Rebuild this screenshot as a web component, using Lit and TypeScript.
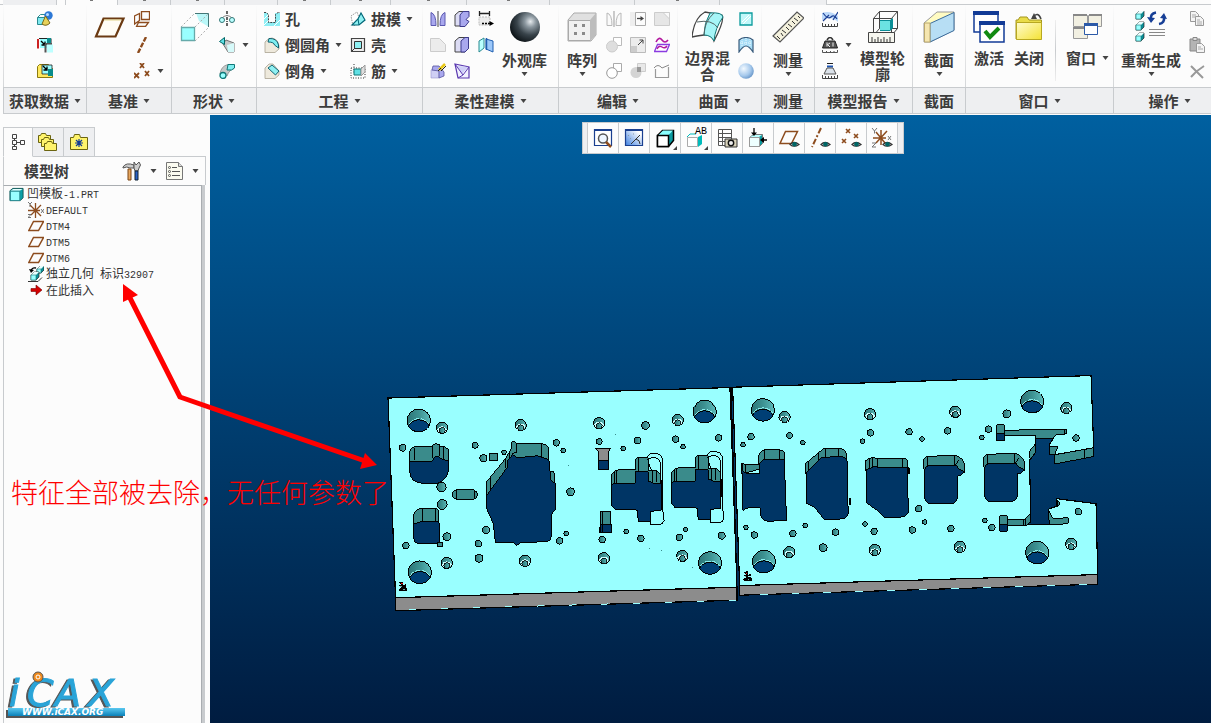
import { LitElement, html, css, svg, nothing } from "lit";
import { customElement } from "lit/decorators.js";

type Tpl = unknown;

/* ---------- 16px icons ---------- */
const cube = (x: number, y: number, s: number) => svg`
  <path d="M${x} ${y + 3}l3-3h${s}v${s}l-3 3h-${s}z" fill="#0b8f97" stroke="#222" stroke-width=".7"/>
  <path d="M${x} ${y + 3}l3-3h${s}l-3 3z" fill="#e8ffff"/>
  <rect x=${x} y=${y + 3} width=${s} height=${s} fill="#9ff" stroke="#177" stroke-width=".6"/>`;
const eye = svg`<path d="M9 14.500Q13 10.500 18 14.500Q13 18 9 14.500z" fill="#fff" stroke="#333" stroke-width="1.200"/><circle cx="13.500" cy="14.300" r="2.300" fill="#066"/>`;

const ICONS: Record<string, Tpl> = {
  shapes: svg`<path d="M.5 6.500h9v7h-9z" fill="#7fe9ef" stroke="#2a8a90"/><path d="M.5 6.500l3-3h5" fill="none" stroke="#2a8a90"/><circle cx="11.500" cy="4.500" r="4.200" fill="#2d78d6"/><circle cx="10.500" cy="3.500" r="1.500" fill="#b8dcff"/><path d="M5 13l3.500-8 4.500 7Q9 16 5 13z" fill="#e8d25a" stroke="#7a6a1a"/>`,
  copyGeom: svg`<path d="M2 1.500h12v5" fill="none" stroke="#222"/><path d="M3 2h10v9H3z" fill="#9ff"/><path d="M10 1h4v6h-4z" fill="#0a8c8c"/><path d="M1 2v9.500" stroke="#c22" stroke-width="2"/><path d="M4 4l4 4M8 4.500V8H4.500" stroke="#000" stroke-width="1.300" fill="none"/><path d="M8.500 7v8.500M8 7h7" stroke="#555" stroke-width="2"/><path d="M10 7.500h6v8h-6z" fill="#bdffff"/>`,
  shrink: svg`<path d="M.5 3.500l2-2h9v4h4v9h-15z" fill="#ffe95e" stroke="#8c7a10"/><path d="M5 2h10v9H5z" fill="#9ff" stroke="#222" stroke-width=".8"/><path d="M6 3l4 4M10 3.500V7H6.500" stroke="#000" stroke-width="1.300" fill="none"/><path d="M11 6h5v7h-5z" fill="#0a8c8c"/>`,
  planes: svg`<g fill="none" stroke="#8d4c1e" stroke-width="1.300"><path d="M7.500.5h8v8h-8zM5.500 2.500v7l-5 3.500V5zM4.500 11.500h10l-3 4h-9z"/></g>`,
  axis: svg`<path d="M12 0L4 16" stroke="#8d4c1e" stroke-width="2.400" stroke-dasharray="5 1.500"/>`,
  points: svg`<g stroke="#8d4c1e" stroke-width="1.800"><path d="M6 0l4 5M10 0L6 5M0 10l5 5M5 10l-5 5M11 8l4 5M15 8l-4 5"/></g>`,
  revolve: svg`<path d="M8 0v16" stroke="#000" stroke-width="1.200" stroke-dasharray="3 1 1 1"/><path d="M2 8Q8 1 14 8" fill="none" stroke="#888"/><circle cx="3" cy="9" r="2.500" fill="#bff" stroke="#377"/><circle cx="13" cy="9" r="2.500" fill="#bff" stroke="#377"/>`,
  sweep: svg`<path d="M4 7L7 3l8 3v9H9z" fill="#c4c8c8" stroke="#555" stroke-width=".8"/><path d="M8 8l7-2v9H9z" fill="#d6fafa"/><path d="M.5 4.500L5.500.5v7z" fill="#5fe0e4" stroke="#066"/>`,
  blend: svg`<path d="M1 11Q2 3 9 1.500l6 4Q10 7 8 13z" fill="#c4c8c8" stroke="#888" stroke-width=".8"/><path d="M9 1.500h6.500V5l-3 2H8z" fill="#7feef0" stroke="#177"/><circle cx="4" cy="12.500" r="3" fill="#9ff" stroke="#177" stroke-width="1.300"/>`,
  hole: svg`<path d="M0 2h4v9h7V2h5v13H0z" fill="#8eeef4"/><path d="M0 8l4-4M0 14L5 9M10 15l6-6" stroke="#fff"/><path d="M0 1.500h2l2.500 2v8h7v-8l2.500-2h2" fill="none" stroke="#444" stroke-dasharray="2 1"/>`,
  round: svg`<path d="M1 5Q5 .5 8 1q6 1 7 8v3l-4 3.500H1z" fill="#eee9dc" stroke="#aaa292" stroke-width=".8"/><path d="M5 1.500Q13 1 14.500 8v3l-4-3Q10 5 4 5z" fill="#7feef0" stroke="#056" stroke-width=".9"/>`,
  chamfer: svg`<path d="M1 5l4-4h4l6 7v4l-4 3.500H1z" fill="#eee9dc" stroke="#aaa292" stroke-width=".8"/><path d="M8 2l7 6-3.500 4L4 5z" fill="#8ff0f2" stroke="#056" stroke-width=".9"/>`,
  draft: svg`<path d="M1 5l6-4 4 11-8 3z" fill="#fff" stroke="#999" stroke-dasharray="1.500 1"/><path d="M2 14L8 8l3-6 4 7-6 5z" fill="#8ff0f2" stroke="#067" stroke-width="1.200"/><path d="M8 8l1 6" stroke="#067"/>`,
  shell: svg`<path d="M1.500 1.500h13v13h-13z" fill="#eee" stroke="#444" stroke-width="1.200"/><path d="M4.500 4.500h7v7h-7z" fill="#8ff0f2" stroke="#333"/><path d="M2 14l3-3" stroke="#333"/>`,
  rib: svg`<path d="M1 5h14v10H1zM4 1v10" fill="none" stroke="#333" stroke-dasharray="1 1.500"/><path d="M4 6h7v6H4z" fill="#5fe0e4" stroke="#177"/><path d="M11 6l4-4v7l-4 4z" fill="#ddd" stroke="#999"/>`,
  mirrorP: svg`<path d="M1 1.500Q6 3 6 14.500H1zM15 1.500Q10 3 10 14.500h5z" fill="#a9a8ee" stroke="#5b59b0"/><path d="M8 0v16" stroke="#444"/>`,
  flexA: svg`<path d="M1 4l4-3.500h9l-3 3.500v11H1z" fill="#dcdcf4" stroke="#444"/><path d="M6 4l3-3.500h6v5l-3 3 3 2-4 5H6z" fill="#a9a8ee" stroke="#3d3b8c"/>`,
  dim: svg`<path d="M1.500 0v5M11.500 0v5M1 2.500h11" stroke="#222" stroke-width="1.300"/><path d="M1 6h11v4l-2 4H1z" fill="#ececec" stroke="#bbb" stroke-dasharray="2 1"/><path d="M4 12.500h8" stroke="#000" stroke-width="1.300" stroke-dasharray="2 1"/><path d="M11.500 10l4.500 2.500-4.500 2.500z" fill="#000"/>`,
  fadeA: svg`<path d="M.5 1.500h9l6 6v7H.5z" fill="#ececec" stroke="#ccc"/>`,
  flexB: svg`<path d="M1 4l4-3.500h9.500v11L11 15H1z" fill="#dcdcf4" stroke="#444"/><path d="M7 4l4-3.500h3.500v11L11 15H7z" fill="#a9a8ee" stroke="#3d3b8c"/>`,
  attach: svg`<path d="M1 4l5-3v10l-5 4z" fill="#bff" stroke="#2a8a90"/><path d="M8 2l7 2v11l-7-3z" fill="#9cc8fa" stroke="#1f5fb0"/><path d="M8.500 1v12" stroke="#1f5fb0" stroke-width="1.500"/>`,
  wizard: svg`<path d="M1 7h8v8H1z" fill="#cfcff4" stroke="#9795cc" stroke-width=".6"/><path d="M3 3h6l5 6v4l-5 2V8L2 7z" fill="#a9a8ee" stroke="#55539c" stroke-width=".8"/><path d="M9 7l6-6" stroke="#e8c818" stroke-width="2.500"/><path d="M8 8l3-3M11 8l5-5" stroke="#222" stroke-width="1"/>`,
  triFlex: svg`<path d="M1 1l14 3v11H4z" fill="#f2f2fe" stroke="#5b39b0" stroke-width="1.200"/><path d="M3 3l5 8 6-7z" fill="#cfcff8"/><path d="M1 1l8 11 6-8M9 12l-5 3" stroke="#5b39b0" fill="none"/>`,
  mirrorG: svg`<path d="M1 2Q6 3 6 14.500H1zM15 2Q10 3 10 14.500h5z" fill="#fafafa" stroke="#b8b8b8"/><path d="M8 0v16" stroke="#999"/>`,
  extend: svg`<path d="M0 1h6v14H0z" fill="#eee"/><path d="M5.500 1.500h10v13h-10z" fill="#fcfcfc" stroke="#aaa"/><path d="M7 7.500h4" stroke="#444" stroke-width="1.300"/><path d="M10.500 5l3.500 2.500-3.500 2.500z" fill="#444"/>`,
  fadeB: svg`<path d="M.5 1.500h15v13H.5z" fill="#e6e6e6" stroke="#ccc"/><path d="M9 1.500h6.500V8z" fill="#fafafa" stroke="#ccc"/>`,
  mergeA: svg`<path d="M7.500.5h8v8h-8z" fill="#fff" stroke="#bbb"/><circle cx="6" cy="9.500" r="5.500" fill="#dedede" stroke="#ccc"/>`,
  scale: svg`<path d="M.5.5h15v15H.5z" fill="#ececec" stroke="#bbb"/><path d="M1 9h6v6H1z" fill="#ccc"/><path d="M8 8l5-5M9.500 3H13v3.500" stroke="#444" fill="none"/>`,
  wrap: svg`<path d="M2 5Q5-1 8 3t6 0" fill="none" stroke="#b3169e" stroke-width="1.600"/><path d="M3.500 7.500h12l-3 7H.5z" fill="#fff" stroke="#8a3be0" stroke-width="1.300"/><path d="M3 12q2-4 5-2t5-1" stroke="#b3169e" fill="none" stroke-width="1.400"/>`,
  unite: svg`<path d="M7.500.5h8v8h-8z" fill="#fff" stroke="#aaa"/><circle cx="6" cy="10" r="5.300" fill="#fff" stroke="#999"/>`,
  cut: svg`<path d="M7.500.5h8v8h-8z" fill="#e8e8e8" stroke="#ccc"/><circle cx="6" cy="9.500" r="5.500" fill="#d4d4d4"/><path d="M7 4h4v5H7z" fill="#999"/>`,
  curveG: svg`<path d="M1.500 6v8.500h13V4" fill="none" stroke="#999" stroke-width="1.200"/><path d="M0 5q4-5 8 0l7-3" stroke="#888" fill="none"/>`,
  fill: svg`<path d="M2 2h12v12H2z" fill="#c2f8fa" stroke="#0a9a9c" stroke-width="1.300"/><path d="M4 11l7-7M5 13l8-8" stroke="#fff"/>`,
  quilt: svg`<path d="M1 3Q8-2 15 3v12Q11 9 8 9T1 15z" fill="#a8ddf6" stroke="#3a5c7c" stroke-width="1.200"/><path d="M4 2v8M8 1v8M12 2v8M2 6h12" stroke="#e8f8ff" stroke-dasharray="1 1"/>`,
  ball: svg`<circle cx="8" cy="8" r="7.800" fill="url(#gBall)"/>`,
  mCurve: svg`<path d="M0 2Q8-1 16 5v6Q8 4 0 9z" fill="#bcd9fa"/><path d="M1 2q5 7 8 4t6 2M1 10l6-6M11 9l5-8" stroke="#1c3f94" fill="none" stroke-width="1.200"/><path d="M.5 12v3.500h15V12M3.500 13v2M6.500 13v2M9.500 13v2M12.500 13v2" stroke="#444" fill="none"/>`,
  weight: svg`<path d="M5 3q3-5 6 0" fill="none" stroke="#333" stroke-width="1.600"/><path d="M3 4h10l2.500 7H.5z" fill="#555" stroke="#222"/><path d="M5 5.500v4M5 8l3-2M6 8l2 2M11 5.500v4" stroke="#eee" fill="none"/><path d="M.5 13v2.500h15V13M4.500 14v1M8.500 14v1M12 14v1" stroke="#555" fill="none"/>`,
  analyze: svg`<path d="M5 .5h6" stroke="#222"/><path d="M5 3.500h6" stroke="#1c55b4" stroke-width="2"/><path d="M5 5h6l3 6H2z" fill="#dbe2ea" stroke="#555"/><path d="M.5 12v3.500h15V12M3.500 13v2M6.500 13v2M9.500 13v2M12.500 13v2" stroke="#444" fill="none"/>`,
  copy: svg`<g fill="#f4f4f4" stroke="#999"><path d="M1.500.5h5l3 3v7h-8z"/><path d="M6.500 5.500h5l3 3v6h-8z"/></g><path d="M3 4h4M3 6h4M8 9h3M8 11h5M8 13h5" stroke="#aaa"/>`,
  paste: svg`<path d="M1 2h10v12H1z" fill="#b4b4b4" stroke="#888"/><path d="M4 .5h4v3H4z" fill="#ddd" stroke="#888"/><path d="M7.500 6.500h5l3 3v6h-8z" fill="#f4f4f4" stroke="#999"/><path d="M9 10h3M9 12h5" stroke="#aaa"/>`,
  del: svg`<path d="M2 3l12 12M15 3Q7 8 2 14" stroke="#999" stroke-width="2" fill="none"/>`,
  /* tree and side panel */
  treeTab: svg`<g fill="none" stroke="#444"><path d="M2.500.5h4v4h-4zM2.500 6.500h4v4h-4zM2.500 12.500h4v3h-4zM10.500 6.500h4v4h-4z"/><path d="M4.500 4.500v2M4.500 10.500v2M6.500 8.500h4"/></g>`,
  part: svg`<path d="M1 4l3-2.500h11v10l-3 3H1z" fill="#0aa0a8" stroke="#155"/><path d="M1.500 4l3-2h10l-3 2z" fill="#e4ffff"/><rect x="1.500" y="4.500" width="10" height="10" fill="#9ff" stroke="#2a8a90"/>`,
  csys: svg`<path d="M0 8.500h12M7.500 1v15M2 3l11 11M13 3L3 13" fill="none" stroke="#8d4c1e" stroke-width="1.300"/><path d="M0 0l2 2 2-2M2 2v3M0 12.500h3l-3 3h3M13 7l3 4M16 7l-3 4" stroke="#666" fill="none" stroke-width=".9"/>`,
  plane: svg`<path d="M5.500 3.500h10l-5 9H.8z" fill="none" stroke="#8d4c1e" stroke-width="1.500"/>`,
  indep: svg`${cube(9, 0, 4)}<path d="M3 5q1-4 5-3" fill="none" stroke="#000" stroke-width="1.300"/><path d="M1 3l5 1-3 3z" fill="#000"/>${cube(3, 6, 5)}<path d="M0 15.500h10l4-4" stroke="#333" fill="none"/>`,
  insert: svg`<path d="M3 6.500h5V3l6 5-6 5V9.500H3z" fill="#d40000" stroke="#700" stroke-width=".6"/>`,
};

/* ---------- 32px icons ---------- */
const BIG: Record<string, Tpl> = {
  plane: svg`<path d="M9.500 7.500h20l-8 18H2z" fill="#fffdf6" stroke="#6b3a12" stroke-width="2.200"/><path d="M10 9h17" stroke="#e2d58c"/>`,
  extrude: svg`<path d="M2 16L16 2h14v14L16 30z" fill="#fdfdfd"/><path d="M17 2h13v14L20 10z" fill="#b9f7f8"/><g stroke="#aaa" stroke-dasharray="2 2" fill="none"><path d="M2 16L16 2M16 16L30 2M16 30l14-14"/></g><path d="M16 2.500h13.500V16" fill="none" stroke="#477"/><path d="M2.500 16.500h13v13h-13z" fill="#9ff" stroke="#6aa" stroke-width="1.300"/>`,
  sphere: svg`<circle cx="16" cy="16" r="15" fill="url(#gSphere)"/>`,
  pattern: svg`<path d="M2 9l6-7h22v22l-5 6H2z" fill="#e0e0e0" stroke="#aaa"/><path d="M2.500 9.500h22v20h-22z" fill="#f1f1f1" stroke="#aaa"/><path d="M24 9l6-7v22l-6 6z" fill="#bdbdbd"/><g fill="#8a8a8a"><path d="M8 13h3v3H8zM16 13h3v3h-3zM8 21h3v3H8zM16 21h3v3h-3z"/></g>`,
  boundary: svg`<path d="M0 26Q2 7 13 1l17 3Q33 9 22 30q-2-7-10-6T0 26z" fill="#fff" stroke="#444" stroke-width="1.300"/><path d="M18 2q12-1 13 4-8 11-9 24-3-6-10-6Q12 12 18 2z" fill="#a6f5f7" stroke="#177"/><path d="M5 11q15-3 21 6M22 2q-10 9-10 22" fill="none" stroke="#566"/>`,
  ruler: svg`<path d="M1 25L25 1l7 6L8 31z" fill="#f4f1dd" stroke="#555" stroke-width="1.200"/><path d="M8 28l-3-3M11 25l-2-3M14 22l-4-3M17 19l-3-3M20 16l-4-3M23 13l-3-3M26 10l-4-3M28 7l-2-2" stroke="#333"/>`,
  outline: svg`<g fill="none" stroke="#444"><path d="M6.500 7.500h18v17h-18zM12.500.5h18v17h-18zM6.500 7.500l6-7M24.500 7.500l6-7M24.500 24.500l6-7M6.500 24.500l6-7"/></g><path d="M13 9h10l3-2v10l-3 3H13z" fill="#0b8f97"/><path d="M13 10h10v9H13z" fill="#6be3e2"/><path d="M1.500 21.500h26v10h-26z" fill="#f6f6ef" stroke="#444"/><path d="M5 31v-5M8 31v-3M11 31v-5M14 31v-3M17 31v-5M20 31v-3M23 31v-5" stroke="#333"/>`,
  section: svg`<path d="M1 12L14 1h17v18L7 31H1z" fill="#fffbc2" stroke="#999"/><path d="M7 12.500L31 1.500v18L7 31z" fill="#b7def4" stroke="#3b6c9c"/><path d="M1.500 12h5.500v19H1.500z" fill="#f5e6b0" stroke="#bba86c"/>`,
  activate: svg`<path d="M1 1h24v20H1z" fill="#fff" stroke="#123b96" stroke-width="1.500"/><path d="M0 0h26v4H0z" fill="#123b96"/><path d="M7 11h24v20H7z" fill="#fff" stroke="#123b96" stroke-width="1.500"/><path d="M6 10h26v4H6z" fill="#123b96"/><path d="M12 20l5 6 9-9" stroke="#118a11" stroke-width="4" fill="none"/>`,
  closeWin: svg`<path d="M3 9h2l2-3h7l2 3h12.500v19H3z" fill="#e9dc48" stroke="#a49620"/><path d="M3.500 11.500h25v17h-25z" fill="url(#gFolder)" stroke="#b8a820"/><path d="M20 6q5-6 8 2" stroke="#444" stroke-width="1.600" fill="none"/><path d="M18 8l3-6 3 6z" fill="#444"/>`,
  windows: svg`<g fill="#f2f0e2" stroke="#999"><path d="M1.500 4.500h14v11h-14zM16.500 4.500h13v11h-13zM1.500 16.500h14v11h-14z"/></g><path d="M1 3h14v2H1zM17 3h13v2H17zM1 16h14v2H1z" fill="#888"/><path d="M12.500 12.500h13v11h-13z" fill="#fff" stroke="#2c5aa8"/><path d="M12 12h14v3H12z" fill="#2c5aa8"/>`,
  regen: svg`${cube(1, 0, 5)}${cube(1, 11, 5)}${cube(1, 22, 5)}<path d="M21 1.500q-6 1-5 7M24 13q6-1 5-7" stroke="#173f96" stroke-width="2.500" fill="none"/><path d="M12 6l4 6 4-5zM25 7l4-5 3 6z" fill="#173f96"/><path d="M14 18.500h16M14 21.500h16M14 24.500h16" stroke="#888"/>`,
};

/* ---------- graphics toolbar icons, 20px ---------- */
const VIEW: [string, Tpl][] = [
  ["重新调整", svg`<path d="M1.500 1.500h17v16h-17z" fill="#fff" stroke="#1a3f8f" stroke-width="1.200"/><path d="M1 1h18v2H1z" fill="#1a3f8f"/><circle cx="10" cy="10.500" r="4.500" fill="#eef6ff" stroke="#555" stroke-width="1.500"/><path d="M13 14l5 5" stroke="#8d4c1e" stroke-width="2.500"/>`],
  ["重画", svg`<path d="M1.500 1.500h17v16h-17z" fill="url(#gWin)" stroke="#1a3f8f" stroke-width="1.200"/><path d="M1 1h18v2H1z" fill="#1a3f8f"/><path d="M4 7l1 1M6 10l1 1M10 12l1 1M9 6h1" stroke="#89a" /><path d="M7 16l9-9M16 16q0-4-4-5" stroke="#333" fill="none"/>`],
  ["显示样式", svg`<path d="M2.500 7.500l5-5h11v10l-5 6h-11z" fill="#0b9aa0" stroke="#000" stroke-width="1.500"/><path d="M3 7.500l5-5h10l-5 5z" fill="#8ff"/><path d="M2.500 7.500h11v11h-11z" fill="#fff" stroke="#000" stroke-width="1.500"/>`],
  ["已命名视图", svg`<path d="M1 9l3-3h6" fill="none" stroke="#0bb"/><path d="M1.500 9.500h10v9h-10z" fill="#fff" stroke="#aaa"/><path d="M12 9l4-2v9l-4 3z" fill="#0bb"/><text x="9" y="6" font-size="10" font-family="Liberation Mono" fill="#000">AB</text>`],
  ["视图管理器", svg`<path d="M1.500 1.500h13v16h-13zM1.500 5.500h13M1.500 9.500h13M1.500 13.500h13M5.500 1.500v16" fill="#fff" stroke="#555"/><path d="M8 11h12v8H8z" fill="#d8d2ba" stroke="#333"/><circle cx="14" cy="15" r="2.700" fill="#eee" stroke="#111" stroke-width="1.400"/>`],
  ["透视图", svg`<path d="M1.500 9.500l4-3h9v9l-3 3h-10z" fill="#0b9aa0" stroke="#777"/><path d="M2 9l4-2h8l-3 2z" fill="#bff"/><path d="M1.500 9.500h10v9h-10z" fill="#eff" stroke="#999"/><path d="M6 0v5M19 12h-4" stroke="#000" stroke-width="1.300"/><path d="M3 4.500h6L6 8zM16 9v6l-4-3z" fill="#000"/>`],
  ["平面显示", svg`<path d="M6.500 3.500h12l-6 12H1z" fill="none" stroke="#8d4c1e" stroke-width="1.500"/><g transform="translate(2 2)">${eye}</g>`],
  ["轴显示", svg`<path d="M11 0L2 19" stroke="#8d4c1e" stroke-width="2" stroke-dasharray="6 2 2 2"/><g transform="translate(2 2)">${eye}</g>`],
  ["点显示", svg`<path d="M5 1l4 4M9 1L5 5M13 6l4 4M17 6l-4 4M1 11l4 4M5 11l-4 4" stroke="#8d4c1e" stroke-width="1.600"/><g transform="translate(2 2)">${eye}</g>`],
  ["坐标系显示", svg`<path d="M1 10h13M9 2v15M4 4l9 11M15 3L4 15" fill="none" stroke="#8d4c1e" stroke-width="1.500"/><path d="M0 0l2.500 3L5 0M2.500 3v2.500M0 15h4l-4 4h4M16 8l3 4M19 8l-3 4" stroke="#777" fill="none"/><g transform="translate(2 2)">${eye}</g>`],
];

const icon = (name: string) => html`<svg class="i16" viewBox="0 0 16 16" aria-hidden="true">${ICONS[name]}</svg>`;
const arrow = html`<svg class="arrow" viewBox="0 0 7 4" aria-hidden="true"><path d="M.5 0h6l-3 4z" fill="#444"/></svg>`;

const sm = (name: string, title: string, opts: { text?: boolean; menu?: boolean } = {}) => html`
  <button class="sm ${opts.text ? "" : "bare"}" aria-label=${title}>${icon(name)}${opts.text ? html`<span>${title}</span>` : nothing}${opts.menu ? arrow : nothing}</button>`;
const big = (name: string, text: string, menu = false) => html`
  <button class="big ${menu ? "menu" : ""}"><svg class="i32" viewBox="0 0 32 32" aria-hidden="true">${BIG[name]}</svg><span>${text}</span>${menu ? arrow : nothing}</button>`;
const bigBare = (name: string, title: string) => html`
  <button class="big" aria-label=${title}><svg class="i32" viewBox="0 0 32 32" aria-hidden="true">${BIG[name]}</svg></button>`;

@customElement("ribbon-bar")
class RibbonBar extends LitElement {
  static styles = css`
    :host { display: block; padding-bottom: 1px; background: #fcfcfc; font: bold 15px/16px "Noto Sans CJK SC", sans-serif; color: #3c3c3c; }
    .tabs { display: grid; grid-template-columns: 54px 9px 52px 53px 54px 53px 53px 60px 76px 83px 85px 85px 107px; height: 4px; padding-left: 3px; border-bottom: 1px solid #c8cbce; }
    .tab { background: #eeeff1; border-right: 1px solid #c8cbce; display: flex; justify-content: center; }
    .tab.gap { background: #fcfcfc; }
    .tab.on { background: #fcfcfc; height: 5px; }
    .tab.mark::before { content: ""; width: 3px; height: 1px; background: #777; }
    .groups { display: grid; grid-template-columns: 83px 85px 85px 166px 136px 119px 84px 53px 98px 53px 148px minmax(98px, 1fr); padding-left: 3px; overflow: hidden; }
    .group { display: flex; flex-direction: column; }
    .body { display: flex; gap: 8px; height: 82px; padding-left: 7px; border-left: 1px solid; border-image: linear-gradient(#fcfcfc, #d4d6d8) 1; box-sizing: border-box; }
    .body.mid { justify-content: center; padding-left: 0; }
    .label { display: flex; align-items: center; justify-content: center; gap: 5px; height: 27px; background: #eeeff1; border: 1px solid #c8cbce; border-right: 0; font: inherit; color: inherit; padding: 0; }
    .group:last-child .label { padding-left: 14px; }
    button { font: inherit; color: inherit; background: none; border: 0; padding: 0; margin: 0; }
    .col { display: grid; grid-template-rows: repeat(3, 26px); padding-top: 1px; justify-items: start; align-content: start; }
    .sm { display: flex; align-items: center; gap: 5px; }
    .sm.bare { gap: 7px; }
    .big { display: flex; flex-direction: column; align-items: center; gap: 7px; padding-top: 6px; }
    .big span { max-width: 45px; overflow-wrap: anywhere; }
    .big.menu span { max-width: none; padding-top: 2px; }
    .big.menu .arrow { margin-top: -3px; }
    .side { display: flex; align-items: center; gap: 6px; }
    .i16 { width: 16px; height: 16px; flex: none; }
    .i32 { width: 32px; height: 32px; flex: none; }
    .arrow { width: 7px; height: 4px; flex: none; }
    .sep { width: 1px; margin: 15px 2px 6px; background: linear-gradient(#eee, #c8cbce, #eee); }
    .defs { position: absolute; }
  `;
  private group(label: string, menu: boolean, body: Tpl, mid = false) {
    return html`<section class="group"><div class="body ${mid ? "mid" : ""}">${body}</div>
      <button class="label">${label}${menu ? arrow : nothing}</button></section>`;
  }
  render() {
    const tabs = ["", "gap", "on mark", "mark", "mark", "", "mark", "mark", "mark", "mark", "", "mark", ""];
    return html`
      <div class="tabs">${tabs.map((t) => html`<span class="tab ${t}"></span>`)}</div>
      <svg class="defs" width="0" height="0" aria-hidden="true"><defs>
        <radialGradient id="gSphere" cx=".68" cy=".32" r=".75"><stop offset="0" stop-color="#e6ebee"/><stop offset=".25" stop-color="#8a969e"/><stop offset=".6" stop-color="#38434a"/><stop offset="1" stop-color="#0c1216"/></radialGradient>
        <radialGradient id="gBall" cx=".35" cy=".35" r=".75"><stop offset="0" stop-color="#f2f9ff"/><stop offset=".6" stop-color="#a6c9ec"/><stop offset="1" stop-color="#5f8fc4"/></radialGradient>
        <linearGradient id="gFolder" x1="0" y1="0" x2="1" y2="1"><stop offset="0" stop-color="#fffcd0"/><stop offset="1" stop-color="#f4e234"/></linearGradient>
      </defs></svg>
      <div class="groups">
        ${this.group("获取数据", true, html`<div class="col">${sm("shapes", "用户定义特征")}${sm("copyGeom", "复制几何")}${sm("shrink", "收缩包络")}</div>`, true)}
        ${this.group("基准", true, html`${bigBare("plane", "平面")}<div class="col">${sm("planes", "草绘")}${sm("axis", "轴")}${sm("points", "点", { menu: true })}</div>`)}
        ${this.group("形状", true, html`${bigBare("extrude", "拉伸")}<div class="col">${sm("revolve", "旋转")}${sm("sweep", "扫描", { menu: true })}${sm("blend", "扫描混合")}</div>`)}
        ${this.group("工程", true, html`
          <div class="col">${sm("hole", "孔", { text: true })}${sm("round", "倒圆角", { text: true, menu: true })}${sm("chamfer", "倒角", { text: true, menu: true })}</div>
          <div class="col">${sm("draft", "拔模", { text: true, menu: true })}${sm("shell", "壳", { text: true })}${sm("rib", "筋", { text: true, menu: true })}</div>`)}
        ${this.group("柔性建模", true, html`
          <div class="col">${sm("mirrorP", "镜像")}${sm("fadeA", "替代")}${sm("wizard", "编辑倒圆角")}</div>
          <div class="col">${sm("flexA", "移动")}${sm("flexB", "偏移")}${sm("triFlex", "识别")}</div>
          <div class="col">${sm("dim", "修改解析")}${sm("attach", "连接")}</div>
          ${big("sphere", "外观库", true)}`)}
        ${this.group("编辑", true, html`${big("pattern", "阵列", true)}
          <div class="col">${sm("mirrorG", "镜像")}${sm("mergeA", "修剪")}${sm("unite", "合并")}</div>
          <div class="col">${sm("extend", "延伸")}${sm("scale", "偏移")}${sm("cut", "相交")}</div>
          <div class="col">${sm("fadeB", "加厚")}${sm("wrap", "投影")}${sm("curveG", "实体化")}</div>`)}
        ${this.group("曲面", true, html`${big("boundary", "边界混合")}<div class="col">${sm("fill", "填充")}${sm("quilt", "样式")}${sm("ball", "自由式")}</div>`)}
        ${this.group("测量", false, big("ruler", "测量", true), true)}
        ${this.group("模型报告", true, html`<div class="col">${sm("mCurve", "曲线分析")}${sm("weight", "质量属性", { menu: true })}${sm("analyze", "分析")}</div>${big("outline", "模型轮廓")}`)}
        ${this.group("截面", false, big("section", "截面", true), true)}
        ${this.group("窗口", true, html`${big("activate", "激活")}${big("closeWin", "关闭")}<i class="sep"></i>
          <button class="big"><svg class="i32" viewBox="0 0 32 32" aria-hidden="true">${BIG.windows}</svg><div class="side">窗口${arrow}</div></button>`)}
        ${this.group("操作", true, html`${big("regen", "重新生成", true)}<div class="col">${sm("copy", "复制")}${sm("paste", "粘贴")}${sm("del", "删除")}</div>`)}
      </div>`;
  }
}

@customElement("model-tree")
class ModelTree extends LitElement {
  static styles = css`
    :host { display: flex; flex-direction: column; box-sizing: border-box; width: 210px; padding: 12px 4px 0 3px; background: #fcfcfc; font: 12px/16px "Noto Sans CJK SC", sans-serif; color: #333; }
    button { font: inherit; color: inherit; background: none; border: 0; padding: 0; margin: 0; }
    .tabs { display: flex; }
    .tab { display: grid; place-items: center; width: 31px; height: 30px; box-sizing: border-box; border: 1px solid #c8cbce; border-left-width: 0; background: #eeeff1; }
    .tab.on { width: 30px; border-left-width: 1px; border-bottom-color: #fcfcfc; background: #fcfcfc; }
    .rest { flex: 1; border-bottom: 1px solid #c8cbce; }
    .head { display: flex; align-items: center; height: 28px; padding: 0 6px 0 20px; border-left: 1px solid #c8cbce; border-right: 1px solid #c8cbce; }
    .title { flex: 1; margin: 0; font: bold 15px/16px "Noto Sans CJK SC", sans-serif; color: #3c3c3c; }
    .drop { display: flex; align-items: center; gap: 8px; margin-left: 7px; }
    .tree { flex: 1; margin: 0 4px 0 0; padding: 0; list-style: none; border: 1px solid #a9adb1; border-width: 1px 1px 0 1px; border-left-color: #c8cbce; box-shadow: 3px 0 #c8cbce; }
    .row { display: flex; align-items: center; height: 16px; gap: 2px; padding-left: 24px; white-space: pre; }
    .row.root { padding-left: 5px; gap: 3px; }
    .latin { font-family: "Liberation Mono", monospace; font-size: 10px; font-style: normal; font-weight: normal; }
    .i16 { width: 16px; height: 16px; }
    .i15 { width: 15px; height: 15px; }
    .i20 { width: 20px; height: 20px; }
    .arrow { width: 7px; height: 4px; }
  `;
  render() {
    const folder = svg`<path d="M.5 3.500h2l1-2h4l1 2h4v7h-12z" fill="#fff36b" stroke="#6b6410"/>`;
    const rows: [string, Tpl][] = [
      ["csys", html`<div><i class="latin">DEFAULT</i></div>`],
      ["plane", html`<div><i class="latin">DTM4</i></div>`],
      ["plane", html`<div><i class="latin">DTM5</i></div>`],
      ["plane", html`<div><i class="latin">DTM6</i></div>`],
      ["indep", html`<div>独立几何<i class="latin"> </i>标识<i class="latin">32907</i></div>`],
      ["insert", html`<div>在此插入</div>`],
    ];
    return html`
      <div class="tabs">
        <button class="tab on" aria-label="模型树">${icon("treeTab")}</button>
        <button class="tab" aria-label="文件夹浏览器"><svg class="i20" viewBox="0 0 20 20">${folder}<g transform="translate(3 4)">${folder}</g><g transform="translate(6 8)">${folder}</g></svg></button>
        <button class="tab" aria-label="收藏夹"><svg class="i20" viewBox="0 0 20 20"><path d="M1.500 5.500h3l1-3h5l1 3h7v12h-17z" fill="#fff36b" stroke="#6b6410"/><path d="M10 7v8M6 11h8M7 8l6 6M13 8l-6 6" stroke="#123b96" stroke-width="1.200"/></svg></button>
        <span class="rest"></span>
      </div>
      <div class="head">
        <h2 class="title">模型树</h2>
        <button class="drop" aria-label="设置"><svg class="i20" viewBox="0 0 20 20"><path d="M1 6q3-5 11-2v3H8q-3-2-7 0z" fill="#ccc" stroke="#555"/><path d="M6 8h3v11H6z" fill="#e8a860" stroke="#7a4414"/><path d="M12 1l2 3 3-3q3 3 0 6l-1 3h-3l-1-3z" fill="#ccc" stroke="#555"/><path d="M13 10h3v9h-3z" fill="#2a62c8" stroke="#123"/></svg>${arrow}</button>
        <button class="drop" aria-label="显示"><svg class="i20" viewBox="0 0 20 20"><path d="M2.500 1.500h12l4 4v13h-16z" fill="#fbfbf0" stroke="#777"/><path d="M14.500 1.500v4h4" fill="#ddd" stroke="#777"/><path d="M8 6.500h5M8 10.500h8M8 14.500h8" stroke="#555"/><g fill="none" stroke="#555"><circle cx="5.500" cy="6.500" r="1"/><circle cx="5.500" cy="10.500" r="1"/><circle cx="5.500" cy="14.500" r="1"/></g></svg>${arrow}</button>
      </div>
      <ul class="tree">
        <li class="row root"><svg class="i15" viewBox="0 0 16 16">${ICONS.part}</svg><div>凹模板<i class="latin">-1.PRT</i></div></li>
        ${rows.map(([n, t]) => html`<li class="row">${icon(n)}${t}</li>`)}
      </ul>`;
  }
}

/* ---------- the plate model ---------- */
const bore = ([x, y]: number[]) => svg`<g transform="translate(${x} ${y})">
  <ellipse rx="35" ry="34" fill="url(#gTeal)" stroke="#000" stroke-width="3"/>
  <path d="M-31 16C-18-8 18-8 31 16C26 28 12 34 0 34S-26 28-31 16z" fill="#003f75" stroke="#000" stroke-width="3"/>
  <path d="M-29 10C-16-11 16-11 29 10" fill="none" stroke="#9ff" stroke-width="2.500" stroke-dasharray="16 4"/></g>`;
const cbore = ([x, y]: number[]) => svg`<g transform="translate(${x} ${y})">
  <circle r="17" fill="url(#gTeal)" stroke="#000" stroke-width="3"/>
  <path d="M-15 5C-10-8 10-8 15 5L9 14H-9z" fill="#cff"/>
  <circle cy="8" r="9" fill="url(#gTeal)" stroke="#000" stroke-width="2.500"/></g>`;
const dot = ([x, y, r]: number[]) => svg`<circle cx=${x} cy=${y} r=${r - 1} fill="url(#gTeal)" stroke="#000" stroke-width="3"/>`;
const wall = (d: string) => svg`<path d=${d} fill="#3a8b8b" stroke="#000" stroke-width="3"/>`;
const open = (d: string) => svg`<path d=${d} fill="#003565" stroke="#000" stroke-width="3"/>`;
const line = (d: string) => svg`<path d=${d} fill="none" stroke="#000" stroke-width="3"/>`;
const mark = (x: number, y: number) => svg`<g transform="translate(${x} ${y})"><path d="M0 3H8L14 0V12L24 8V16H14L26 20V30H4L0 24L10 20L2 12H10Z" fill="#000"/><path d="M8 8h4" stroke="#e22" stroke-width="3"/><path d="M4 16h5M14 26h5" stroke="#9ff" stroke-width="2"/></g>`;

const crossPocket = svg`
  ${wall("M155 345V312Q162 298 175 298H225V268L232 262H264V300H290L302 312V342Z")}
  ${line("M162 305V342M170 300V340M235 264V304M276 302V336M288 302V336")}
  ${open("M154 342Q160 338 225 338V304H265V332L280 338H303V420L272 423V455H235L231 420Q228 417 165 418L154 405Z")}
  <path d="M272 423L303 420V330L308 420L312 452Q308 463 295 463H272Z" fill="#9ff" stroke="#000" stroke-width="3"/>
  ${line("M258 262Q268 247 285 248Q302 250 307 264V410M262 266Q290 254 301 275V312M264 264Q266 290 276 302")}`;
const roundPocket = svg`
  ${wall("M28 312V282Q30 275 42 272L125 271Q145 278 149 295V322Z")}${line("M40 274V302M121 272V300L134 283")}
  ${open("M30 312Q32 302 42 301L125 299Q130 312 148 318Q146 330 128 332V400Q125 412 115 414L55 416Q32 415 31 400Z")}`;

@customElement("plate-scene")
class PlateScene extends LitElement {
  static styles = css`
    :host { display: block; height: 100%; }
    .scene { display: block; width: 100%; height: 100%; }
  `;
  render() {
    return html`<svg class="scene" viewBox="210 114 1001 609" role="img" aria-label="凹模板" shape-rendering="crispEdges">
      <defs><linearGradient id="gTeal"><stop offset="0" stop-color="#2c7577"/><stop offset=".5" stop-color="#3d9292"/><stop offset="1" stop-color="#5cbcbc"/></linearGradient></defs>
      <path d="M387.500 397.500L731 387L737 587V600L395 610.500V597.500Z" fill="#8c8c8c" stroke="#000" stroke-width="1.200"/>
      <path d="M387.500 397.500L730 387L737 587L395 597.500Z" fill="#9ff" stroke="#000" stroke-width="1.200"/>
      <path d="M395 610L737 600" stroke="#9ff" stroke-dasharray="7 25" stroke-dashoffset="-14"/>
      <g transform="translate(915 365) scale(.33333)">
        <path d="M-526 661L550 628V657L-526 690Z" fill="#8c8c8c" stroke="#000" stroke-width="3.500"/>
        <path d="M-526 690L550 657" stroke="#9ff" stroke-width="3" stroke-dasharray="24 72" stroke-dashoffset="-60"/>
        <path d="M-547 65L530 30L538 247L421 268H404V237L418 218H362V262L345 285L349 445L342 478H407L401 452V432L427 422V400L545 415L550 628L-526 661Z" fill="#9ff" stroke="#000" stroke-width="3.500"/>
        ${wall("M538 247V273L421 296V268Z")}${line("M510 252V277")}
        ${wall("M269 195L362 192L457 191V205L425 208L413 219H362V209L269 211Z")}${line("M451 192V205")}
        ${wall("M247 178H269V205H247Z")}${open("M247 205H269V226H247Z")}
        ${wall("M345 258L362 236V262L347 283Z")}${wall("M404 237L410 244L430 244L421 268L404 265Z")}
        ${wall("M278 463H330L349 445V470L335 480H278Z")}${wall("M256 451H278V478H256Z")}${open("M256 478H278V498H256Z")}${line("M327 463V480M333 458V478")}
        ${wall("M401 432L416 460L460 457Q467 466 460 475L418 478H407L401 455Z")}${wall("M427 402L437 414L430 424Z")}
        ${roundPocket}<g transform="translate(180 -6)">${roundPocket}</g>
        ${[[353, 108], [368, 562]].map(bore)}
        ${[[122, 139], [456, 128], [136, 545], [470, 536]].map(cbore)}
        ${[[22, 221, 8], [99, 196, 11], [277, 145, 13], [222, 191, 11], [202, 216, 8], [485, 218, 11], [12, 430, 11], [30, 470, 8], [109, 490, 11], [211, 465, 8], [232, 487, 11], [492, 439, 11]].map(dot)}
      </g>
      <g transform="translate(380 380) scale(.33333)">
        ${wall("M88 245V212Q92 200 103 199H157V194Q168 185 178 194V199H192L203 206V245Z")}${line("M101 202V240M157 199V232M178 197V228M190 200V238")}
        ${open("M88 242H155Q168 216 182 235L203 242V275Q198 300 168 310H130Q88 305 88 275Z")}
        ${wall("M227 328H281Q291 334 291 343T281 357H227Q215 352 215 343T227 328Z")}${line("M227 328V357M281 328V357")}
        ${wall("M326 218H350V241H326Z")}
        ${wall("M98 433V408Q103 386 125 383H168L175 390V433Z")}${line("M125 384V424M166 384V424")}
        ${open("M100 432Q110 425 125 424H172L176 430L178 490H112Q100 486 100 475Z")}${wall("M171 486H186V500H171Z")}
        ${wall("M318 345V305L375 235L393 205V186Q400 178 409 190H485Q503 190 506 210V242H400L318 347Z")}${line("M409 190V215L396 220M485 192V232M330 292V330M375 235V262M388 214V240")}
        ${wall("M510 272H518L523 280V315H510Z")}
        ${open("M319 345L383 258V240L397 222L412 232L470 226L500 235L506 240L512 300L526 310V388L513 402V468Q512 482 500 484L420 487L409 496L400 487H345L339 430L319 385Z")}
        ${[[115, 120], [118, 576]].map(bore)}
        ${[[185, 142], [421, 134], [199, 548], [434, 542]].map(cbore)}
        ${[[66, 202, 11], [284, 195, 10], [309, 233, 12], [371, 216, 8], [528, 187, 11], [549, 210, 8], [183, 320, 15], [185, 372, 16], [199, 469, 13], [76, 496, 11], [317, 449, 12], [294, 490, 11], [296, 534, 13], [538, 482, 11]].map(dot)}
        ${mark(54, 603)}
      </g>
      <g transform="translate(560 370) scale(.33333)">
        <path d="M107 234H150L146 242V270H115V242Z" fill="#8c8c8c" stroke="#000" stroke-width="3"/>${open("M115 270H146V298H115Z")}
        ${wall("M120 424H152V464H120Z")}${open("M120 464H155V487H118Z")}${line("M126 424V487M122 424V487")}
        ${crossPocket}<g transform="translate(180 -6)">${crossPocket}</g>
        ${[[434, 123], [450, 578]].map(bore)}
        ${[[117, 158], [353, 149], [131, 564], [367, 557]].map(cbore)}
        ${[[31, 364, 13], [18, 489, 8], [256, 165, 13], [232, 210, 11], [117, 213, 10], [189, 234, 8], [347, 206, 11], [369, 229, 8], [476, 202, 11], [126, 508, 11], [198, 483, 8], [242, 504, 11], [358, 501, 11], [377, 478, 8], [485, 496, 12]].map(dot)}
        <path d="M22 286h3M166 193h3M268 535h3M304 541h3M397 592h3" stroke="#3a8b8b" stroke-width="3"/>
      </g>
      <g transform="translate(735 370) scale(.33333)">
        ${wall("M20 312V278L33 283H72V255Q76 240 90 238H135L148 244V272Z")}${line("M33 284V310M90 239V266M133 238V266M24 282V300")}
        ${open("M21 300L35 310H75V278Q80 266 95 266L148 268L155 450L100 453Q80 450 77 435L76 412L36 413L24 420Z")}
        ${wall("M211 310V280L268 233H318Q334 240 335 255V280Z")}${line("M252 246V268M273 234V260M311 234V260M221 276V300")}
        ${open("M214 308L258 262L270 260L325 259Q338 265 338 275L340 432Q335 446 315 446L268 447Q255 430 240 412L225 404L214 398Z")}
        ${wall("M391 300V272L403 264L420 260V263H510L518 270V295Z")}${line("M403 266V294M412 263V290M428 264V290M503 264V290")}
        ${open("M394 298L420 288L430 291L500 290L518 292L521 425Q518 438 500 440L450 441Q430 420 410 408L394 396Z")}
        <path d="M342 380l8 6v16l-8 4zM518 288l8 6v16l-8 4z" fill="#000"/>
        ${[[84, 118], [87, 574]].map(bore)}
        ${[[149, 140], [406, 131], [163, 546], [420, 539]].map(cbore)}
        ${[[24, 223, 8], [48, 199, 11], [164, 195, 10], [204, 217, 8], [33, 471, 8], [58, 494, 11], [174, 490, 11], [211, 466, 8], [265, 532, 13], [302, 486, 11], [383, 212, 8], [407, 187, 11], [523, 184, 11], [391, 461, 8], [418, 483, 11], [533, 479, 11]].map(dot)}
        ${mark(24, 602)}
      </g>
    </svg>`;
  }
}

@customElement("app-root")
class AppRoot extends LitElement {
  static styles = css`
    :host { display: flex; flex-direction: column; height: 100vh; overflow: hidden; background: #fcfcfc; }
    .main { position: relative; display: flex; flex: 1; min-height: 0; }
    .view { position: relative; flex: 1; min-width: 0; background: linear-gradient(#0060a0, #001c40); }
    .tools { position: absolute; top: 7px; left: 372px; display: flex; height: 32px; box-sizing: border-box; border: 1px solid #c8cbce; padding: 0 5px 0 4px; background: #eeeff1; }
    .tool { position: relative; display: grid; place-items: center; width: 31px; padding: 0; background: #fcfcfc; border: 0 solid #c8cbce; border-right-width: 1px; }
    .tool:first-of-type { border-left-width: 1px; width: 32px; }
    .tool.more::after { content: ""; position: absolute; right: 3px; bottom: 3px; border: 2px solid; border-color: transparent #444 #444 transparent; }
    .i20 { width: 20px; height: 20px; overflow: visible; }
    .pointer { position: absolute; left: 0; top: 0; width: 400px; height: 380px; pointer-events: none; }
    .note { position: absolute; left: 11px; top: 361px; margin: 0; font: 300 27px/32px "Noto Sans CJK SC", sans-serif; color: #f00; white-space: nowrap; }
    .logo { position: absolute; left: 4px; bottom: 2px; width: 124px; height: 50px; }
    .word { filter: drop-shadow(-2px 1px 0 #555); }
  `;
  render() {
    return html`
      <ribbon-bar></ribbon-bar>
      <main class="main">
        <model-tree></model-tree>
        <div class="view">
          <plate-scene></plate-scene>
          <div class="tools" role="toolbar">
            ${VIEW.map(([t, g], i) => html`<button class="tool ${i === 2 || i === 3 ? "more" : ""}" aria-label=${t}><svg class="i20" viewBox="0 0 20 20"><defs><linearGradient id="gWin" x1="0" y1="1" x2="1" y2="0"><stop offset="0" stop-color="#3d7fe0"/><stop offset=".8" stop-color="#fff"/></linearGradient></defs>${g}</svg></button>`)}
          </div>
        </div>
        <svg class="pointer" viewBox="0 114 400 380" aria-hidden="true">
          <path d="M129 295L180 396L365 460" fill="none" stroke="#f00" stroke-width="5" stroke-linejoin="round"/>
          <path d="M123 283L138 294L123 301ZM377 464L360 468L365 452Z" fill="#f00"/>
        </svg>
        <p class="note">特征全部被去除，无任何参数了</p>
        <svg class="logo" viewBox="0 0 124 50" role="img" aria-label="iCAX">
          <defs><linearGradient id="gLogo" x1="0" y1="0" x2="0" y2="1"><stop offset="0" stop-color="#5ac8f0"/><stop offset="1" stop-color="#0a80b8"/></linearGradient></defs>
          <text class="word" x="5 23 51 84" y="35" font-family="DejaVu Sans" font-style="italic" font-size="38" fill="#2aa4d8" stroke="#2aa4d8">iCAX</text>
          <circle cx="34" cy="6" r="5" fill="#f08a1c" stroke="#555"/><circle cx="34" cy="6" r="2" fill="none" stroke="#fff"/>
          <path d="M2 39h117v8H2z" fill="#555"/><path d="M4 37h117v8H4z" fill="url(#gLogo)"/>
          <text x="18" y="44" font-family="DejaVu Sans" font-weight="bold" font-style="italic" font-size="9" fill="#fff">WWW.iCAX.ORG</text>
        </svg>
      </main>`;
  }
}
